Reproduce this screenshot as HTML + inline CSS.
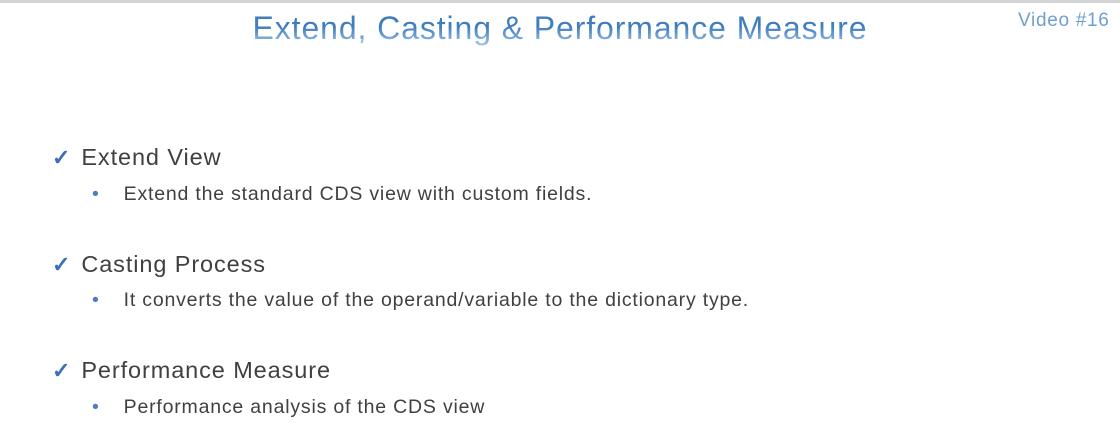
<!DOCTYPE html>
<html><head><meta charset="utf-8"><style>
body{margin:0;width:1120px;height:436px;background:#fff;position:relative;overflow:hidden;font-family:"Liberation Sans",sans-serif}
.topline{position:absolute;left:0;top:0;width:1120px;height:3px;background:#d4d4d4}
.title{position:absolute;left:0;width:1120px;top:10px;text-align:center;font-size:32px;color:#4a86c0;background:linear-gradient(#3f7dbd 45%,#a9cbea 100%);-webkit-background-clip:text;background-clip:text;-webkit-text-fill-color:transparent;letter-spacing:0.9px}
.vid{position:absolute;left:1018px;top:10px;font-size:19px;color:#6f9fcf;letter-spacing:0.7px}
.h{position:absolute;left:52px;font-size:23.5px;color:#404040;letter-spacing:0.9px}
.h span{color:#3c6fb5;font-size:22px;font-weight:bold;margin-right:10px}
.b{position:absolute;left:92px;font-size:19.5px;color:#404040;letter-spacing:0.8px}
.b span{color:#4a7cc0;margin-right:24px}
</style></head><body>
<div class="topline"></div>
<div class="title">Extend, Casting &amp; Performance Measure</div>
<div class="vid">Video #16</div>
<div class="h" style="top:144px"><span>✓</span>Extend View</div>
<div class="b" style="top:183px"><span>•</span>Extend the standard CDS view with custom fields.</div>
<div class="h" style="top:251px"><span>✓</span>Casting Process</div>
<div class="b" style="top:289px"><span>•</span>It converts the value of the operand/variable to the dictionary type.</div>
<div class="h" style="top:357px"><span>✓</span>Performance Measure</div>
<div class="b" style="top:396px"><span>•</span>Performance analysis of the CDS view</div>
</body></html>
